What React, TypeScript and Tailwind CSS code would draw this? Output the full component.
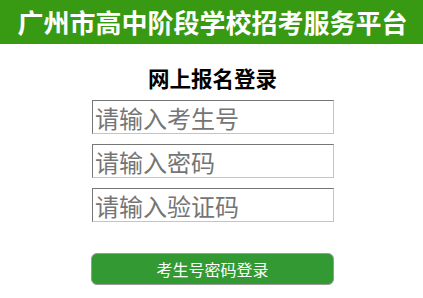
import { memo } from 'react';

const CJK = "font-['Microsoft_YaHei','Noto_Sans_CJK_SC',sans-serif]";

const FIELDS = ['请输入考生号', '请输入密码', '请输入验证码'];

const Field = memo(function Field({ placeholder, type }: { placeholder: string; type?: string }) {
    return (
        <input
            type={type ?? 'text'}
            placeholder={placeholder}
            className={`box-border block h-[34px] w-[242px] border border-t-[#767676] border-l-[#767676] border-r-[#c4c4c4] border-b-[#c4c4c4] bg-white pl-[2px] text-[24px] leading-[32px] text-black outline-none placeholder:text-[#757575] ${CJK}`}
        />
    );
});

export default function App() {
    return (
        <div className={`h-[298px] w-full bg-white ${CJK}`}>
            <header className="flex h-[44px] items-center justify-center bg-[#389a12] pl-[2px]">
                <h1 className="text-[26px] font-bold leading-none text-white">广州市高中阶段学校招考服务平台</h1>
            </header>
            <main className="flex flex-col items-center pl-[2px]">
                <h2 className="mt-[22px] h-[24px] text-[21.5px] font-bold leading-[24px] text-black">网上报名登录</h2>
                <form className="mt-[10px] flex flex-col gap-[10px] pl-[1px]" onSubmit={(e) => e.preventDefault()}>
                    <Field placeholder={FIELDS[0]} />
                    <Field placeholder={FIELDS[1]} type="password" />
                    <Field placeholder={FIELDS[2]} />
                </form>
                <button
                    type="button"
                    className="mt-[31px] box-border flex h-[32px] w-[243px] items-center justify-center rounded-[6px] border border-[#9a9a9a] bg-[#339933] text-[16px] leading-none text-white"
                >
                    考生号密码登录
                </button>
            </main>
        </div>
    );
}
